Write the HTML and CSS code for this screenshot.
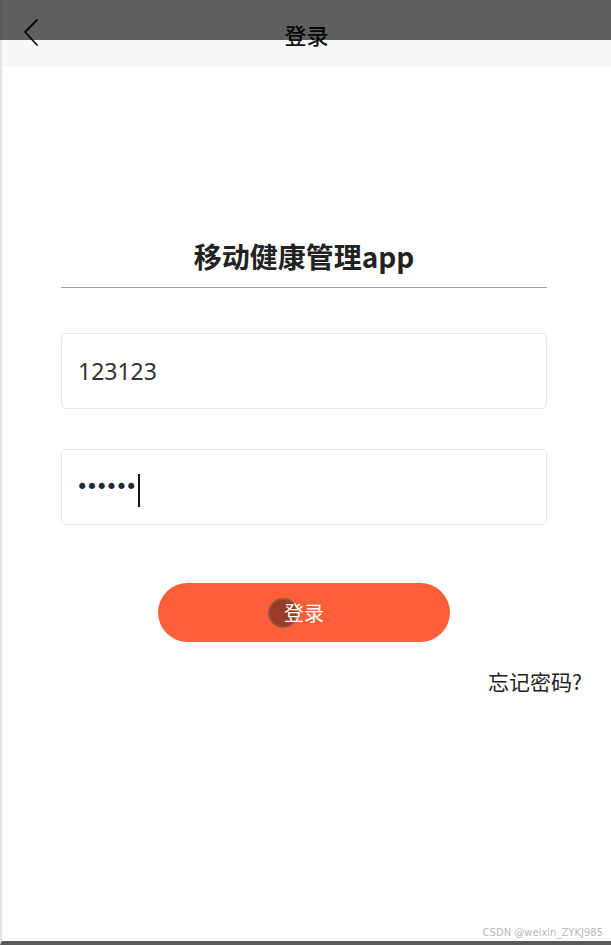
FILE: index.html
```html
<!DOCTYPE html>
<html lang="zh">
<head>
<meta charset="utf-8">
<title>登录</title>
<link rel="stylesheet" href="styles.css">
</head>
<body>
<div class="page">
  <header class="nav">
    <svg class="back" width="20" height="30" viewBox="0 0 20 30" aria-hidden="true">
      <path d="M15 2 L3 14 L15 27" fill="none" stroke="#111" stroke-width="1.8" stroke-linecap="round" stroke-linejoin="round"/>
    </svg>
    <h1 class="nav-title">登录</h1>
    <div class="status-overlay"></div>
  </header>

  <main class="form">
    <h2 class="app-title">移动健康管理app</h2>
    <div class="field">123123</div>
    <div class="field field-pwd"><span class="dots">••••••</span><span class="caret"></span></div>
    <button class="login-btn"><span class="touch"></span><span class="btn-text">登录</span></button>
  </main>
  <div class="forgot">忘记密码?</div>

  <div class="watermark">CSDN @weixin_ZYKJ985</div>
</div>
</body>
</html>
```

FILE: styles.css
```css
* { box-sizing: border-box; }
html, body { margin: 0; padding: 0; }
body {
  background: #fff;
  font-family: "Noto Sans", "Noto Sans CJK SC", sans-serif;
  color: #222;
  width: 611px;
  height: 945px;
  overflow: hidden;
}
.page {
  position: relative;
  height: 945px;
  border-left: 2px solid #e2e2e8;
  border-bottom: 4px solid #5a5a5a;
}
.nav {
  position: relative;
  height: 66px;
  background: #f7f7f7;
  display: flex;
  justify-content: center;
  align-items: flex-start;
}
.back {
  position: absolute;
  left: 20px;
  top: 18px;
}
.nav-title {
  margin: 0;
  padding-top: 19px;
  font-family: "Noto Sans CJK SC", sans-serif;
  font-size: 22px;
  font-weight: 500;
  line-height: 30px;
  color: #111;
}
.status-overlay {
  position: absolute;
  left: -2px;
  top: 0;
  right: 0;
  height: 40px;
  background: rgba(0, 0, 0, 0.615);
}
.form {
  margin: 0 64px 0 59px;
  display: flex;
  flex-direction: column;
}
.app-title {
  margin: 170px 0 0;
  padding-bottom: 11px;
  line-height: 40px;
  font-family: "Noto Sans CJK SC", sans-serif;
  font-size: 28px;
  font-weight: 700;
  text-align: center;
  color: #222;
  border-bottom: 1px solid #a4a4aa;
}
.field {
  margin-top: 45px;
  height: 76px;
  border: 1px solid #e8e8e8;
  border-radius: 5px;
  display: flex;
  align-items: center;
  padding-left: 16px;
  font-size: 23px;
  color: #333;
}
.field-pwd {
  margin-top: 40px;
}
.dots {
  font-size: 21px;
  letter-spacing: -2.6px;
  color: #1e2a3a;
  font-family: "DejaVu Sans", sans-serif;
  margin-left: -2px;
}
.caret {
  display: inline-block;
  width: 2px;
  height: 33px;
  background: #111;
  margin-left: 3px;
  margin-top: 6px;
}
.login-btn {
  position: relative;
  align-self: center;
  margin-top: 58px;
  width: 292px;
  height: 59px;
  border: none;
  border-radius: 30px;
  background: #ff5f38;
  color: #fff;
  font-family: "Noto Sans CJK SC", sans-serif;
  font-size: 20px;
  padding: 0;
}
.touch {
  position: absolute;
  left: 110px;
  top: 15px;
  width: 30px;
  height: 30px;
  border-radius: 50%;
  background: rgba(70, 30, 25, 0.55);
  border: 2px solid rgba(140, 110, 110, 0.45);
}
.btn-text {
  position: relative;
}
.forgot {
  margin-top: 27px;
  padding-right: 29px;
  text-align: right;
  font-family: "Noto Sans CJK SC", sans-serif;
  font-size: 21px;
  line-height: 24px;
  color: #222;
}
.watermark {
  position: absolute;
  right: 8px;
  bottom: 3px;
  font-family: "DejaVu Sans", sans-serif;
  font-size: 10px;
  color: #b8b8b8;
}
```
